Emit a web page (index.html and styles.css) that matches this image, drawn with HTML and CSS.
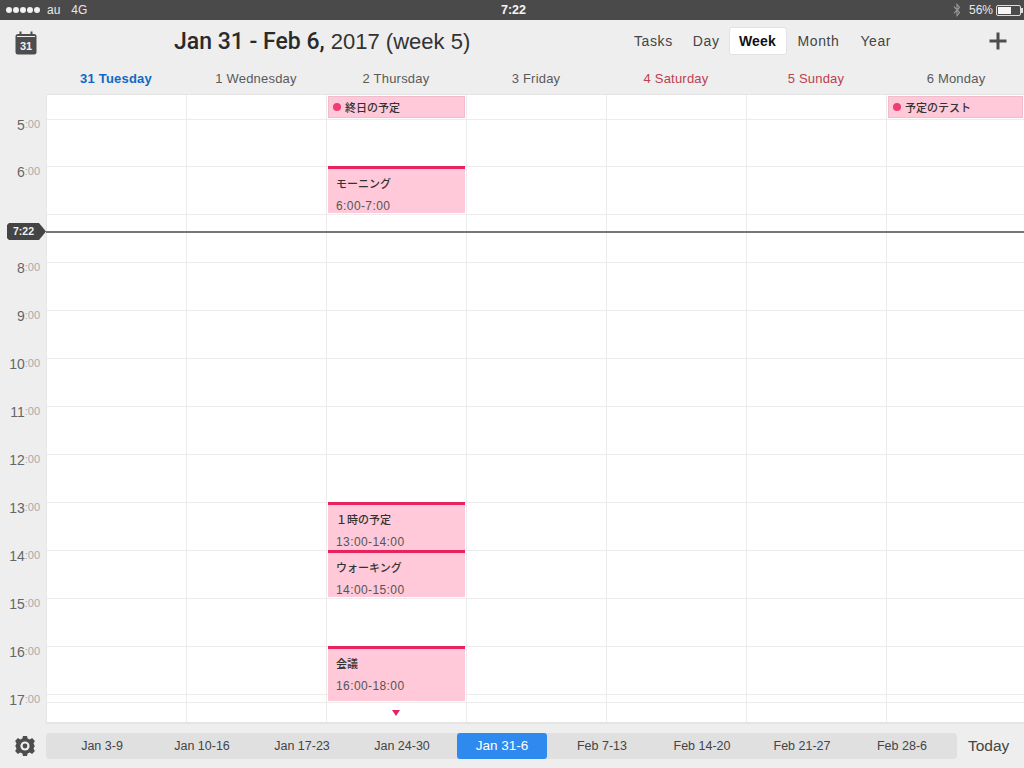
FILE: index.html
```html
<!DOCTYPE html>
<html lang="en">
<head>
    <meta charset="UTF-8">
    <meta name="viewport" content="width=device-width, initial-scale=1.0">
    <title>Week calendar</title>
    <link rel="stylesheet" href="styles.css">
</head>
<body>
<div class="status-bar">
    <div class="status-left">
        <span class="dots"><i></i><i></i><i></i><i></i><i></i></span>
        <span class="carrier">au</span>
        <span class="network">4G</span>
    </div>
    <div class="status-time">7:22</div>
    <div class="status-right">
        <svg class="bt-icon" width="8" height="14" viewBox="0 0 8 14"><path d="M1 3.6 L6.6 9.6 L4 12.6 V1.4 L6.6 4.4 L1 10.4" fill="none" stroke="#9a9a9a" stroke-width="1.1"/></svg>
        <span>56%</span>
        <span class="battery"><span class="battery-fill"></span></span>
    </div>
</div>

<div class="toolbar">
    <svg class="cal-icon" width="22" height="24" viewBox="0 0 22 24">
        <rect x="0.5" y="3" width="21" height="20.5" rx="2.5" fill="#4d4d4d"/>
        <rect x="4.5" y="0.5" width="2" height="5" fill="#4d4d4d"/>
        <rect x="15.5" y="0.5" width="2" height="5" fill="#4d4d4d"/>
        <rect x="2" y="5" width="18" height="1" fill="#eeeeee"/>
        <text x="11" y="19" text-anchor="middle" class="cal-num">31</text>
    </svg>
    <h1 class="title"><b>Jan 31 - Feb 6,</b> 2017 (week 5)</h1>
    <nav class="tabs">
        <a class="tab tab-tasks">Tasks</a>
        <a class="tab tab-day">Day</a>
        <a class="tab tab-active">Week</a>
        <a class="tab tab-month">Month</a>
        <a class="tab tab-year">Year</a>
    </nav>
    <svg class="plus-icon" width="18" height="18" viewBox="0 0 18 18"><path d="M9 0.5 V17.5 M0.5 9 H17.5" stroke="#4d4d4d" stroke-width="3"/></svg>
</div>

<div class="day-heads">
    <div class="day-head today">31 Tuesday</div>
    <div class="day-head">1 Wednesday</div>
    <div class="day-head">2 Thursday</div>
    <div class="day-head">3 Friday</div>
    <div class="day-head weekend">4 Saturday</div>
    <div class="day-head weekend">5 Sunday</div>
    <div class="day-head">6 Monday</div>
</div>

<div class="main">
    <div class="hours">
        <div class="hour hour-first">5<small>:00</small></div>
        <div class="hour">6<small>:00</small></div>
        <div class="hour hour-blank"></div>
        <div class="hour">8<small>:00</small></div>
        <div class="hour">9<small>:00</small></div>
        <div class="hour">10<small>:00</small></div>
        <div class="hour">11<small>:00</small></div>
        <div class="hour">12<small>:00</small></div>
        <div class="hour">13<small>:00</small></div>
        <div class="hour">14<small>:00</small></div>
        <div class="hour">15<small>:00</small></div>
        <div class="hour">16<small>:00</small></div>
        <div class="hour">17<small>:00</small></div>
    </div>

    <div class="sheet">
        <div class="row row-allday"></div>
        <div class="row row-first"></div>
        <div class="row"></div>
        <div class="row"></div>
        <div class="row"></div>
        <div class="row"></div>
        <div class="row"></div>
        <div class="row"></div>
        <div class="row"></div>
        <div class="row"></div>
        <div class="row"></div>
        <div class="row"></div>
        <div class="row"></div>
        <div class="row row-short"></div>
        <div class="row row-last"></div>

        <div class="cols">
            <div class="col"></div>
            <div class="col"></div>
            <div class="col">
                <div class="allday"><i class="dot"></i>終日の予定</div>
                <div class="event ev-morning"><div class="ev-name">モーニング</div><div class="ev-time">6:00-7:00</div></div>
                <div class="event ev-one"><div class="ev-name">１時の予定</div><div class="ev-time">13:00-14:00</div></div>
                <div class="event ev-walk"><div class="ev-name">ウォーキング</div><div class="ev-time">14:00-15:00</div></div>
                <div class="event ev-meeting"><div class="ev-name">会議</div><div class="ev-time">16:00-18:00</div></div>
                <div class="more"></div>
            </div>
            <div class="col"></div>
            <div class="col"></div>
            <div class="col"></div>
            <div class="col">
                <div class="allday"><i class="dot"></i>予定のテスト</div>
            </div>
        </div>

        <div class="now-line"></div>
    </div>
    <div class="now-badge">7:22</div>
</div>

<div class="footer">
    <svg class="gear-icon" width="22" height="22" viewBox="0 0 22 22">
        <path d="M9 1 H13 L13.6 3.6 L15.8 4.5 L18.1 3.1 L20.9 5.9 L19.5 8.2 L20.4 10.4 L21 11 L20.4 11.6 L19.5 13.8 L20.9 16.1 L18.1 18.9 L15.8 17.5 L13.6 18.4 L13 21 H9 L8.4 18.4 L6.2 17.5 L3.9 18.9 L1.1 16.1 L2.5 13.8 L1.6 11.6 L1 11 L1.6 10.4 L2.5 8.2 L1.1 5.9 L3.9 3.1 L6.2 4.5 L8.4 3.6 Z" fill="#4d4d4d"/>
        <circle cx="11" cy="11" r="5.6" fill="#4d4d4d"/>
        <circle cx="11" cy="11" r="4.6" fill="#eeeeee"/>
        <circle cx="11" cy="11" r="2.4" fill="#4d4d4d"/>
    </svg>
    <div class="weeks">
        <div class="week">Jan 3-9</div>
        <div class="week">Jan 10-16</div>
        <div class="week">Jan 17-23</div>
        <div class="week">Jan 24-30</div>
        <div class="week week-active">Jan 31-6</div>
        <div class="week">Feb 7-13</div>
        <div class="week">Feb 14-20</div>
        <div class="week">Feb 21-27</div>
        <div class="week">Feb 28-6</div>
    </div>
    <div class="today-btn">Today</div>
</div>
</body>
</html>
```

FILE: styles.css
```css
* {
    box-sizing: border-box;
}
html, body {
    margin: 0;
    height: 768px;
    overflow: hidden;
}
body {
    font-family: "Liberation Sans", "Noto Sans CJK JP", sans-serif;
    background-color: #eeeeee;
    color: #444;
}

/* status bar */
.status-bar {
    height: 20px;
    background: #4a4a4a;
    color: #e8e8e8;
    font-size: 12px;
    display: flex;
    align-items: center;
    justify-content: space-between;
    padding: 0 3px 0 6px;
    position: relative;
}
.status-left {
    display: flex;
    align-items: center;
}
.dots {
    display: flex;
    gap: 1px;
    margin-right: 7px;
}
.dots i {
    width: 6px;
    height: 6px;
    border-radius: 50%;
    background: #f2f2f2;
}
.carrier {
    margin-right: 11px;
}
.status-time {
    position: absolute;
    left: 501px;
    font-weight: bold;
    font-size: 12.5px;
    color: #f5f5f5;
}
.status-right {
    display: flex;
    align-items: center;
    gap: 5px;
}
.bt-icon {
    margin-right: 3px;
}
.battery {
    width: 25px;
    height: 11px;
    border: 1px solid #ddd;
    border-radius: 2px;
    padding: 1px;
    margin-left: -2px;
    display: block;
    position: relative;
}
.battery::after {
    content: "";
    position: absolute;
    right: -3px;
    top: 2px;
    width: 2px;
    height: 5px;
    background: #ddd;
}
.battery-fill {
    display: block;
    width: 13px;
    height: 7px;
    background: #f5f5f5;
}

/* toolbar */
.toolbar {
    height: 46px;
    display: flex;
    align-items: center;
    padding-left: 15px;
    padding-bottom: 4px;
}
.cal-icon {
    flex: none;
    margin-top: 4px;
}
.cal-num {
    font-size: 11px;
    font-weight: bold;
    fill: #f0f0f0;
}
.title {
    margin: 0 0 0 137px;
    width: 440px;
    font-size: 22px;
    font-weight: normal;
    color: #333;
    white-space: nowrap;
    flex: none;
}
.title b {
    font-family: Roboto, "Liberation Sans", sans-serif;
    font-weight: 500;
    font-size: 23px;
    color: #2a2a2a;
}
.tabs {
    display: flex;
    align-items: center;
    margin-left: 20px;
}
.tab {
    font-size: 14px;
    color: #444;
    height: 28px;
    line-height: 28px;
    letter-spacing: 0.6px;
}
.tab-day {
    margin-left: 20px;
}
.tab-active {
    width: 58px;
    margin-left: 9px;
    text-align: center;
    background: #fff;
    border: 1px solid #e2e2e2;
    border-radius: 3px;
    font-weight: bold;
    color: #111;
    line-height: 26px;
    letter-spacing: 0.2px;
}
.tab-month {
    margin-left: 11px;
}
.tab-year {
    margin-left: 21px;
}
.plus-icon {
    margin-left: auto;
    margin-right: 17px;
}

/* day headers */
.day-heads {
    height: 28px;
    padding-left: 46px;
    display: grid;
    grid-template-columns: repeat(7, 140px);
    align-items: center;
}
.day-head {
    text-align: center;
    font-size: 13px;
    letter-spacing: 0.2px;
    color: #5a5a5a;
    padding-bottom: 3px;
}
.day-head.today {
    color: #1068c8;
    font-weight: bold;
}
.day-head.weekend {
    color: #bb4050;
}

/* main grid */
.main {
    display: flex;
    height: 630px;
    position: relative;
}
.hours {
    width: 46px;
    flex: none;
    padding-top: 24px;
}
.hour {
    height: 48px;
    padding: 0 6px 0 0;
    text-align: right;
    font-size: 14px;
    line-height: 14px;
    color: #666;
}
.hour-first {
    height: 47px;
}
.hour small {
    font-size: 11px;
    color: #aaa;
    position: relative;
    top: -2px;
}
.sheet {
    flex: 1;
    position: relative;
    background: #fff;
    border-top: 1px solid #e4e4e4;
    border-left: 1px solid #e6e6e6;
    border-bottom: 2px solid #e4e4e4;
    height: 630px;
}
.row {
    height: 48px;
    border-bottom: 1px solid #ececec;
}
.row-allday {
    height: 25px;
}
.row-first {
    height: 47px;
}
.row-short {
    height: 8px;
}
.row-last {
    height: 21px;
    border-bottom: none;
}
.cols {
    position: absolute;
    inset: 0;
    display: grid;
    grid-template-columns: repeat(6, 140px) 1fr;
}
.col {
    position: relative;
    border-right: 1px solid #ececec;
}
.col:last-child {
    border-right: none;
}

/* events */
.allday {
    position: absolute;
    top: 1px;
    left: 1px;
    right: 1px;
    height: 22px;
    background: #ffc9d9;
    border: 1px solid #f2bccd;
    display: flex;
    align-items: center;
    font-size: 11px;
    font-weight: 500;
    color: #333;
    padding-bottom: 1px;
}
.dot {
    width: 8px;
    height: 8px;
    border-radius: 50%;
    background: #ee3c74;
    margin: 1px 4px 0;
}
.event {
    position: absolute;
    left: 1px;
    right: 1px;
    background: #ffc9d9;
    border-top: 3px solid #e8215f;
    padding-left: 8px;
    overflow: hidden;
}
.ev-morning {
    top: 71px;
    height: 47px;
}
.ev-one {
    top: 407px;
    height: 48px;
}
.ev-walk {
    top: 455px;
    height: 47px;
}
.ev-meeting {
    top: 551px;
    height: 55px;
}
.ev-name {
    margin-top: 8px;
    font-size: 11px;
    line-height: 15px;
    font-weight: 500;
    color: #333;
}
.ev-time {
    margin-top: 7px;
    font-size: 12px;
    line-height: 15px;
    letter-spacing: 0.4px;
    color: #555;
}
.more {
    position: absolute;
    top: 615px;
    left: 65px;
    width: 0;
    height: 0;
    border-left: 4px solid transparent;
    border-right: 4px solid transparent;
    border-top: 6px solid #e8215f;
}
.now-line {
    position: absolute;
    top: 136px;
    left: -1px;
    right: 0;
    height: 2px;
    background: #777;
}
.now-badge {
    position: absolute;
    top: 129px;
    left: 7px;
    width: 39px;
    height: 17px;
    background: #444;
    color: #f0f0f0;
    font-size: 10.5px;
    font-weight: bold;
    line-height: 17px;
    padding-left: 6px;
    clip-path: polygon(2px 0, 32px 0, 39px 50%, 32px 100%, 2px 100%, 0 15px, 0 2px);
}

/* footer */
.footer {
    height: 44px;
    display: flex;
    align-items: center;
    padding-left: 14px;
}
.gear-icon {
    flex: none;
    margin-right: 10px;
}
.weeks {
    width: 911px;
    height: 26px;
    padding-left: 6px;
    background: #e0e0e0;
    border-radius: 4px;
    display: flex;
}
.week {
    flex: 0 0 100px;
    text-align: center;
    font-size: 12.5px;
    line-height: 26px;
    color: #444;
}
.week-active {
    flex: 0 0 90px;
    margin: 0 5px;
    background: #2f8af0;
    color: #fff;
    border-radius: 3px;
    font-size: 13.5px;
}
.today-btn {
    margin-left: 11px;
    font-size: 15.5px;
    color: #444;
}
```
